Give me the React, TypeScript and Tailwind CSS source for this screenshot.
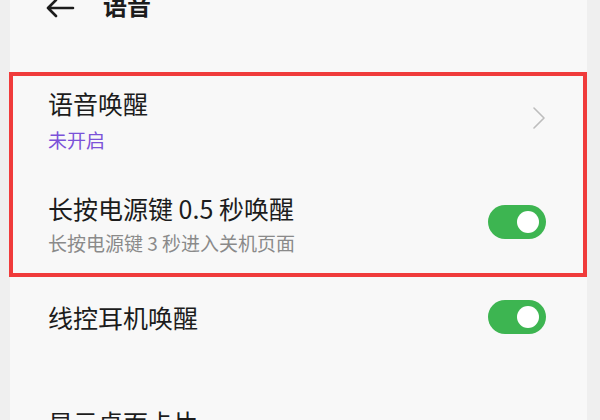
import React from "react";

const Toggle = () => (
  <div className="w-[58px] h-[34px] rounded-full bg-[#3db551] flex items-center justify-end pr-[7px] shrink-0">
    <div className="w-[22px] h-[22px] rounded-full bg-white" />
  </div>
);

export default function App() {
  return (
    <div className="w-[600px] h-[420px] overflow-hidden bg-[#efefef] font-['Noto_Sans_CJK_SC','Noto_Sans',sans-serif] text-[#1c1c1c]">
      <div className="ml-[10px] mr-[13px] h-full bg-[#f8f8f8] flex flex-col">
        {/* header */}
        <div className="-mt-[7px] h-[24px] mb-[55px] flex items-center pl-[35px]">
          <svg width="30" height="20" viewBox="0 0 30 20" className="mt-[6px]">
            <path d="M28 10H3M11 2L3 10l8 8" fill="none" stroke="#1c1c1c" strokeWidth="2.6" strokeLinecap="round" strokeLinejoin="round" />
          </svg>
          <span className="ml-[28px] text-[24px] leading-[24px] font-bold">语音</span>
        </div>

        {/* highlighted group */}
        <div className="-ml-[1px] border-4 border-[#f03b3b] flex flex-col">
          <div className="pt-[15px] pl-[35px] pr-[37px] flex items-center">
            <div className="flex-1 flex flex-col">
              <span className="text-[25px] leading-[25px]">语音唤醒</span>
              <span className="mt-[14px] text-[19px] leading-[19px] text-[#7b52d8]">未开启</span>
            </div>
            <svg width="14" height="22" viewBox="0 0 14 22" className="-mt-[4px]">
              <polyline points="2,1 12,11 2,21" fill="none" stroke="#bdbdbd" strokeWidth="1.6" strokeLinecap="round" strokeLinejoin="round" />
            </svg>
          </div>
          <div className="mt-[47px] pb-[21px] pl-[35px] pr-[37px] flex items-center">
            <div className="flex-1 flex flex-col">
              <span className="text-[25px] leading-[25px]">长按电源键 0.5 秒唤醒</span>
              <span className="mt-[12px] text-[19px] leading-[19px] text-[#8a8a8a]">长按电源键 3 秒进入关机页面</span>
            </div>
            <div className="-mt-[4px]">
              <Toggle />
            </div>
          </div>
        </div>

        {/* row 3 */}
        <div className="mt-[23px] h-[35px] pl-[38px] pr-[41px] flex items-center">
          <span className="flex-1 text-[25px] leading-[25px]">线控耳机唤醒</span>
          <Toggle />
        </div>

        <div className="mt-[40px] ml-[36px] mr-[42px] h-px bg-[#ebebeb]" />

        <div className="mt-[36px] pl-[38px] text-[25px] leading-[25px]">显示桌面卡片</div>
      </div>
    </div>
  );
}
